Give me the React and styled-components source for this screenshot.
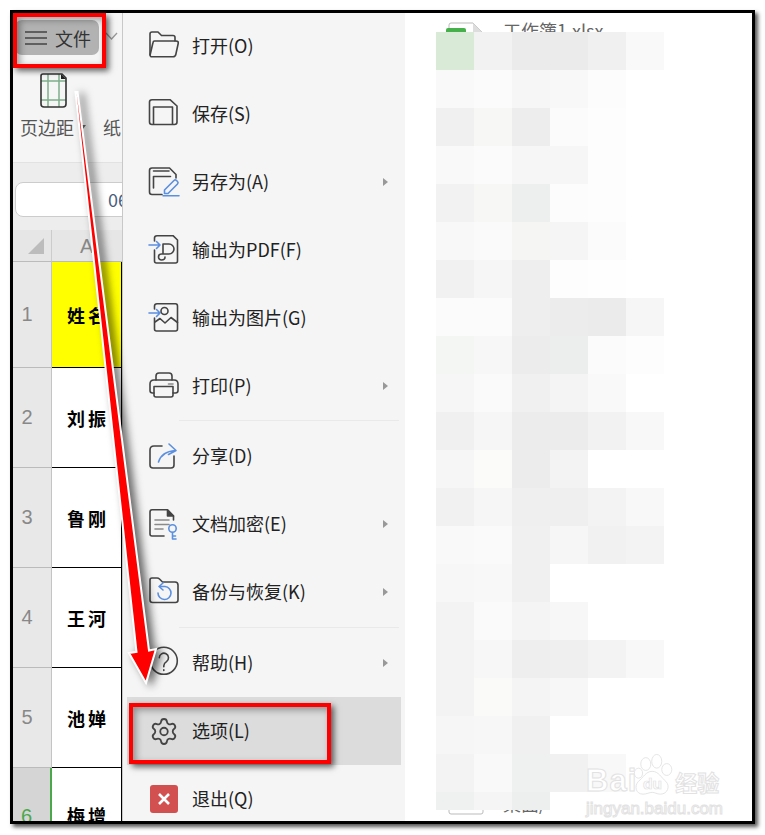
import React from 'react';
import styled, { createGlobalStyle } from 'styled-components';
import { Settings } from 'lucide-react';

const GlobalStyle = createGlobalStyle`
  html, body {
    margin: 0;
    background: #fff;
  }
  * {
    box-sizing: border-box;
  }
`;

const Page = styled.div`
  position: relative;
  width: 765px;
  height: 835px;
  padding: 10px;
  overflow: hidden;
  font-family: "Noto Sans CJK SC", "Noto Sans", sans-serif;
`;
const Frame = styled.div`
  display: flex;
  width: 745px;
  height: 814px;
  border: 3px solid #000;
  background: #fff;
  box-shadow: 3px 3px 4px #555;
  overflow: hidden;
`;

/* spreadsheet behind the menu */
const Sheet = styled.section`
  flex: 0 0 110px;
  display: flex;
  flex-direction: column;
  background: #e8e8e8;
  border-right: 1px solid #c8c8c8;
  overflow: hidden;
`;
const TabRow = styled.div`
  flex: 0 0 49px;
  display: flex;
  align-items: flex-start;
  padding: 7px 0 0 2px;
  background: #f5f5f5;
`;
const FileTab = styled.div`
  display: flex;
  align-items: center;
  gap: 8px;
  width: 84px;
  height: 35px;
  padding-left: 10px;
  border-radius: 7px;
  background: #b2b2b2;
  color: #333;
  font-size: 18px;
  line-height: 1;
`;
const TabCaret = styled.svg`
  margin: 12px 0 0 6px;
`;
const Ribbon = styled.div`
  flex: 0 0 101px;
  display: flex;
  gap: 17px;
  padding: 11px 0 0 7px;
  background: #f5f5f5;
  border-bottom: 1px solid #e2e2e2;
  color: #555;
  font-size: 18px;
  white-space: nowrap;
`;
const RibbonItem = styled.div`
  flex: none;
  display: flex;
  flex-direction: column;
  align-items: center;
  gap: 5px;
`;
const RibbonLabel = styled.div`
  display: flex;
  align-items: center;
  gap: 6px;
  height: 28px;
  margin-top: ${p => (p.$iconless ? '40px' : '0')};
  line-height: 28px;
`;
const DropMark = styled.span`
  width: 0;
  height: 0;
  border-left: 3px solid transparent;
  border-right: 3px solid transparent;
  border-top: 4px solid #666;
`;
const FormulaBar = styled.div`
  flex: 0 0 67px;
  padding: 19px 0 0 2px;
  background: #ededed;
  overflow: hidden;
`;
const NameBox = styled.div`
  width: 140px;
  height: 35px;
  padding-left: 92px;
  border: 1px solid #ccc;
  border-radius: 8px;
  background: #fff;
  color: #4a5f80;
  font-size: 18px;
  line-height: 33px;
`;
const SheetGrid = styled.div`
  display: grid;
  grid-template-columns: 39px 70px;
  grid-template-rows: 32px 106px repeat(5, 100px);
`;
const Corner = styled.div`
  position: relative;
  background: #e6e6e6;
  border-right: 1px solid #ccc;
  border-bottom: 1px solid #bbb;
  &::after {
    content: "";
    position: absolute;
    left: 15px;
    top: 8px;
    border-left: 16px solid transparent;
    border-bottom: 16px solid #bcbcbc;
  }
`;
const ColHead = styled.div`
  padding-left: 28px;
  background: #e6e6e6;
  border-bottom: 1px solid #bbb;
  color: #888;
  font-family: "Liberation Sans", sans-serif;
  font-size: 20px;
  line-height: 32px;
`;
const RowHead = styled.div`
  display: flex;
  align-items: ${p => (p.$active ? 'flex-start' : 'center')};
  justify-content: center;
  padding-top: ${p => (p.$active ? '37px' : '0')};
  padding-right: 10px;
  background: ${p => (p.$active ? '#d5d5d5' : '#e8e8e8')};
  border-right: ${p => (p.$active ? '2px solid #4aa84a' : '1px solid #c4c4c4')};
  border-bottom: 1px solid #bbb;
  color: ${p => (p.$active ? '#4aa84a' : '#888')};
  font-family: "Liberation Sans", sans-serif;
  font-size: 20px;
`;
const NameCell = styled.div`
  display: flex;
  align-items: ${p => (p.$active ? 'flex-start' : 'center')};
  justify-content: center;
  padding-top: ${p => (p.$active ? '34px' : '0')};
  padding-left: 3px;
  background: ${p => (p.$header ? '#ffff00' : '#fff')};
  border-right: 1px solid #000;
  border-bottom: 1px solid #000;
  color: #000;
  font-size: 18px;
  font-weight: 700;
  letter-spacing: 3px;
`;

/* file menu */
const Menu = styled.nav`
  flex: 0 0 282px;
  margin-top: -1px;
  background: #f5f5f5;
`;
const MenuRow = styled.div`
  display: flex;
  align-items: center;
  gap: 13px;
  height: 68px;
  margin: 0 4px;
  padding: 0 13px 0 22px;
  background: ${p => (p.$active ? '#dcdcdc' : 'transparent')};
  color: #222;
  font-size: 18px;
`;
const MenuLabel = styled.span`
  flex: 1;
  margin-top: -2px;
`;
const MenuIcon = styled.svg`
  flex: none;
  width: 30px;
  height: 30px;
  fill: none;
  stroke: #444;
  stroke-width: 1.6;
  stroke-linecap: round;
  stroke-linejoin: round;
  overflow: visible;
`;
const SubMark = styled.span`
  width: 0;
  height: 0;
  border-top: 4.5px solid transparent;
  border-bottom: 4.5px solid transparent;
  border-left: 5px solid #999;
`;
const Divider = styled.div`
  height: 1px;
  margin: ${p => p.$top}px 6px 1px 56px;
  background: #e9e9e9;
`;
const GearSlot = styled.div`
  flex: none;
  display: flex;
  align-items: center;
  justify-content: center;
  width: 30px;
  height: 30px;
  color: #444;
`;
const QuitBox = styled.div`
  flex: none;
  display: flex;
  align-items: center;
  justify-content: center;
  width: 28px;
  height: 28px;
  margin: 0 1px;
  border-radius: 3px;
  background: #d25050;
`;

/* recent files, mostly blurred out */
const Recent = styled.section`
  flex: 1;
  display: flex;
  flex-direction: column;
  justify-content: space-between;
  padding: 7px 0 0 41px;
  background: #fff;
  overflow: hidden;
`;
const FileRow = styled.div`
  display: flex;
  align-items: flex-start;
  gap: 19px;
  height: 24px;
  color: #666;
  font-size: 18px;
  line-height: 20px;
`;
const DeskRow = styled(FileRow)`
  height: 14px;
  align-items: flex-end;
  margin-bottom: 6px;
  line-height: 24px;
`;
const FileThumb = styled.svg`
  flex: none;
  margin-top: 2px;
`;

/* things drawn over the screenshot */
const Mosaic = styled.div`
  position: absolute;
  left: 436px;
  top: 32px;
  display: grid;
  grid-template-columns: repeat(6, 38px);
  grid-auto-rows: 38px;
  height: 778px;
  overflow: hidden;
`;
const Tile = styled.div`
  background: ${p => p.$c};
`;
const RedBox = styled.div`
  position: absolute;
  left: ${p => p.$x}px;
  top: ${p => p.$y}px;
  width: ${p => p.$w}px;
  height: ${p => p.$h}px;
  border: 4px solid #f00;
  box-shadow: 3px 3px 6px rgba(0, 0, 0, .6), inset 3px 3px 7px rgba(0, 0, 0, .35);
`;
const Arrow = styled.svg`
  position: absolute;
  left: 0;
  top: 0;
  filter: drop-shadow(5px 2px 4px rgba(0, 0, 0, .6));
`;
const Watermark = styled.div`
  position: absolute;
  left: 586px;
  top: 751px;
  width: 140px;
  color: #fff;
  -webkit-text-stroke: 1px #e2e2e2;
  font-family: "Liberation Sans", sans-serif;
`;
const MarkTop = styled.div`
  display: flex;
  align-items: flex-end;
  height: 48px;
`;
const MarkBai = styled.span`
  font-size: 31px;
  font-weight: 700;
  line-height: 36px;
  letter-spacing: 1px;
`;
const MarkJing = styled.span`
  font-family: "Noto Sans CJK SC", sans-serif;
  font-size: 22px;
  font-weight: 700;
  line-height: 36px;
`;
const MarkPaw = styled.svg`
  flex: none;
  margin: 0 0 0 -4px;
`;
const MarkUrl = styled.div`
  font-size: 17px;
  line-height: 20px;
  white-space: nowrap;
`;

const blue = '#5b8fdf';
const Blue = styled.path`
  stroke: ${blue};
`;
const Soft = styled.path`
  stroke: #8a8a8a;
`;
const InArrow = () => <Blue d="M0 10H11M7.5 6.5L11 10L7.5 13.5" />;

const icons = {
  open: (
    <>
      <path d="M1 24V3q0-2 2-2H9l3.5 3.5H24q2 0 2 2V10" />
      <path d="M5.5 10H27q2.7 0 2.2 2.5L26.8 23.5q-.5 2.2-2.8 2.2H3q-2.2 0-1.800-2.2L4 11.5q.3-1.500 1.500-1.500z" />
    </>
  ),
  save: (
    <>
      <path d="M3 .7H21L28 7V23q0 2.500-2.500 2.500H3q-2.500 0-2.500-2.500V3Q.5.7 3 .7z" />
      <path d="M4.500 25V8H23.500V25" />
    </>
  ),
  saveAs: (
    <>
      <path d="M13 27.500H3q-2.500 0-2.500-2.500V3.500Q.5 1 3 1H20.500L27 7.500V11" />
      <path d="M4.500 4H20M4.500 21V9.500H21.500" />
      <Blue d="M15.500 26.500V23L25 13.500q1.200-1.200 2.500 0l1 1q1.200 1.300 0 2.500L19 26.500zM14 28.700H30" />
    </>
  ),
  pdf: (
    <>
      <InArrow />
      <path d="M5.500 15V26q0 2 2 2H26.500q2 0 2-2V5L24 .7H8Q5.500.7 5.500 3V6" />
      <path d="M14 19V9h6a5 5 0 0 1 0 10h-7.500a3 3 0 0 0 0 6q3.500 0 3.500-3" />
    </>
  ),
  image: (
    <>
      <InArrow />
      <path d="M5.500 15V26q0 2 2 2H26.500q2 0 2-2V3q0-2.300-2-2.300H8Q5.500.7 5.500 3V6" />
      <circle cx="15.500" cy="8" r="3.500" />
      <path d="M6 19l5-3.500 5 4.500 6-5.500 6.500 5" />
    </>
  ),
  print: (
    <>
      <path d="M7 9V5q0-3 3-3H20q3 0 3 3V9" />
      <path d="M5 22H3.500Q1 22 1 19.500V13q0-4 4-4H25q4 0 4 4v6.500q0 2.500-2.500 2.500H24" />
      <path d="M5 15.500H24V24q0 2-2 2H7q-2 0-2-2z" />
      <Soft d="M19.500 13H24" />
    </>
  ),
  share: (
    <>
      <path d="M13 5H5Q1 5 1 9V24q0 3 3 3H22q3 0 3-3V15" />
      <Blue d="M9.500 21q3-10.500 17-11.500M20 3l7 6.500-7.500 4" />
    </>
  ),
  secure: (
    <>
      <path d="M24.500 11V7L18.500.7H3Q1 .7 1 3V25q0 2 2 2H15" />
      <path d="M18.500 1V7H24.500L18.500 1z" fill="#444" />
      <Soft d="M6 11H20M6 15.500H20M6 20H14" />
      <circle cx="23.500" cy="19.500" r="3.700" stroke={blue} />
      <Blue d="M23.500 23.500V30H27M23.500 27H26.500" />
    </>
  ),
  backup: (
    <>
      <path d="M1 6V3q0-2 2-2H8q1.500 0 2.500 1L13.500 5H26q3 0 3 3V23q0 2.500-2.500 2.500H3.500Q1 25.500 1 23z" />
      <Blue d="M14 6l-4 3.500 4 3.500M10 9.500h6a6.500 6.500 0 1 1-7 6.500" />
    </>
  ),
  help: (
    <>
      <circle cx="14.800" cy="12.800" r="13.500" />
      <path d="M10.300 9.800a4.600 4.600 0 1 1 7.200 3.800q-2.700 1.700-2.700 4.200v1M14.800 21.800v.6" />
    </>
  ),
};

const names = [
  ['1', '姓名'],
  ['2', '刘振'],
  ['3', '鲁刚'],
  ['4', '王河'],
  ['5', '池婵'],
  ['6', '梅增'],
];

const w = '#fff';
const tiles = [
  ['#d9ead6', '#f2f2f2', '#ebebeb', '#ebebeb', '#f0f0f0', '#f9f9f9'],
  ['#f9f9f9', '#fbfbfb', '#f6f6f6', '#f8f8f8', '#fcfcfc', w],
  ['#f0f0f0', '#f7f7f6', '#ededed', '#fbfbfb', '#fdfdfd', w],
  ['#f9f9f9', '#fbfbfb', '#f6f6f6', '#f6f6f6', '#fdfdfd', w],
  ['#f2f2f2', '#f7f7f6', '#edeeee', '#fcfcfc', '#fdfdfd', w],
  ['#f8f8f8', '#fafafa', '#f5f5f4', '#f5f5f5', '#fbfbfb', w],
  ['#f1f1f1', '#f6f6f6', '#eeeeee', '#fdfdfd', '#fefefe', w],
  ['#fbfbfb', '#fbfbfb', '#eeeeee', '#ececec', '#ebebeb', '#f6f6f6'],
  ['#f3f6f3', '#f7f7f7', '#ececec', '#eceded', '#fbfbfb', '#fdfdfd'],
  ['#f6f6f6', '#fafafa', '#f0f0f0', '#f4f4f4', '#f9f9f9', w],
  ['#f0f0f0', '#f6f6f6', '#ececec', '#ececec', '#f2f2f2', '#f8f8f8'],
  ['#f6f6f6', '#fbfbf9', '#ececec', '#f3f3f3', w, w],
  ['#f1f1f1', '#f6f6f6', '#efefef', '#efefef', '#f3f3f3', '#f8f8f8'],
  ['#f9f9f9', '#fafafa', '#f0f0f0', '#f6f6f6', '#f1f1f1', '#f3f3f3'],
  ['#f7f7f7', '#f8f8f8', '#f0f0f0', w, w, w],
  ['#f3f3f3', '#fafafa', '#f4f4f4', '#f7f7f7', w, w],
  ['#f3f3f3', '#f7f7f7', '#eeeeee', '#efefef', '#f3f3f3', '#f8f8f8'],
  ['#f3f3f3', '#fafaf9', '#f4f4f4', '#f7f7f7', w, w],
  ['#f6f6f6', '#f7f7f7', '#f0f0f0', w, w, w],
  ['#f3f3f3', '#f9f9f9', '#eff0f0', '#f1f1f1', '#f8f8f8', w],
  ['#eff0f0', '#f5f5f5', '#edeeee', w, w, w],
];

function Item({ icon, label, more }) {
  return (
    <MenuRow>
      <MenuIcon viewBox="0 0 30 30">{icons[icon]}</MenuIcon>
      <MenuLabel>{label}</MenuLabel>
      {more && <SubMark />}
    </MenuRow>
  );
}

export default function App() {
  return (
    <>
      <GlobalStyle />
      <Page>
        <Frame>
          <Sheet>
            <TabRow>
              <FileTab>
                <svg width="22" height="14" viewBox="0 0 22 14" fill="none" stroke="#444" strokeWidth="1.6">
                  <path d="M0 1H22M0 7H22M0 13H22" />
                </svg>
                文件
              </FileTab>
              <TabCaret width="13" height="8" viewBox="0 0 13 8" fill="none" stroke="#999" strokeWidth="1.3">
                <path d="M1 1L6.500 7L12 1" />
              </TabCaret>
            </TabRow>
            <Ribbon>
              <RibbonItem>
                <svg width="27" height="35" viewBox="0 0 27 35" fill="none">
                  <path d="M8 1V34M19 1V34M1 8H26M1 27H26" stroke="#7fae8c" strokeWidth="1.500" />
                  <path d="M3 1H22L26 5V31q0 3-3 3H4q-3 0-3-3V3q0-2 2-2z" stroke="#333" strokeWidth="1.600" />
                  <path d="M21 1L26 6H21z" fill="#222" />
                </svg>
                <RibbonLabel>
                  页边距
                  <DropMark />
                </RibbonLabel>
              </RibbonItem>
              <RibbonItem>
                <RibbonLabel $iconless>纸张</RibbonLabel>
              </RibbonItem>
            </Ribbon>
            <FormulaBar>
              <NameBox>06</NameBox>
            </FormulaBar>
            <SheetGrid>
              <Corner />
              <ColHead>A</ColHead>
              {names.map(([no, name], i) => (
                <React.Fragment key={no}>
                  <RowHead $active={i === 5}>{no}</RowHead>
                  <NameCell $header={i === 0} $active={i === 5}>{name}</NameCell>
                </React.Fragment>
              ))}
            </SheetGrid>
          </Sheet>

          <Menu>
            <Item icon="open" label="打开(O)" />
            <Item icon="save" label="保存(S)" />
            <Item icon="saveAs" label="另存为(A)" more />
            <Item icon="pdf" label="输出为PDF(F)" />
            <Item icon="image" label="输出为图片(G)" />
            <Item icon="print" label="打印(P)" more />
            <Divider $top={0} />
            <Item icon="share" label="分享(D)" />
            <Item icon="secure" label="文档加密(E)" more />
            <Item icon="backup" label="备份与恢复(K)" more />
            <Divider $top={1} />
            <Item icon="help" label="帮助(H)" more />
            <MenuRow $active>
              <GearSlot>
                <Settings size={33} strokeWidth={1.45} />
              </GearSlot>
              <MenuLabel>选项(L)</MenuLabel>
            </MenuRow>
            <MenuRow>
              <QuitBox>
                <svg width="14" height="14" viewBox="0 0 14 14" stroke="#fff" strokeWidth="2.600">
                  <path d="M2 2L12 12M12 2L2 12" />
                </svg>
              </QuitBox>
              <MenuLabel>退出(Q)</MenuLabel>
            </MenuRow>
          </Menu>

          <Recent>
            <FileRow>
              <FileThumb width="38" height="24" viewBox="0 0 38 24" fill="none">
                <path d="M3 24V3q0-2 2-2H27L37 11V24" stroke="#bbb" />
                <path d="M27 1L37 11H27z" fill="#ddd" />
                <rect x="0" y="6" width="20" height="8" rx="2" fill="#46b04a" />
              </FileThumb>
              工作簿1.xlsx
            </FileRow>
            <DeskRow>
              <FileThumb width="38" height="14" viewBox="0 0 38 14" fill="none">
                <path d="M3 0V11q0 2 2 2H35q2 0 2-2V0" stroke="#bbb" />
              </FileThumb>
              桌面/
            </DeskRow>
          </Recent>
        </Frame>

        <Mosaic>
          {tiles.flat().map((c, i) => (
            <Tile key={i} $c={c} />
          ))}
        </Mosaic>

        <Arrow width="765" height="835" viewBox="0 0 765 835">
          <polygon
            points="75.500,92 77.500,92 149,650.500 156,649 146,683 129,653 136.500,652"
            fill="#f00"
            stroke="#fff"
            strokeWidth="2"
          />
        </Arrow>
        <RedBox $x={13} $y={13} $w={93} $h={55} />
        <RedBox $x={129} $y={703} $w={202} $h={61} />

        <Watermark>
          <MarkTop>
            <MarkBai>Bai</MarkBai>
            <MarkPaw width="42" height="48" viewBox="0 0 46 48" fill="#fff" stroke="#e2e2e2">
              <ellipse cx="14" cy="12" rx="5.500" ry="7" />
              <ellipse cx="26" cy="9" rx="5.500" ry="7.500" />
              <ellipse cx="37" cy="18" rx="5.500" ry="6.500" />
              <ellipse cx="6" cy="22" rx="4.500" ry="5.500" />
              <path d="M21 20c7 0 10 7 15 11 5 5 2 14-6 14-4 0-6-2-9-2s-6 2-10 2c-8 0-10-9-5-14 5-4 8-11 15-11z" />
              <text x="11" y="39" fontFamily="Liberation Sans, sans-serif" fontSize="17" fontWeight="700" strokeWidth="0.800">du</text>
            </MarkPaw>
            <MarkJing>经验</MarkJing>
          </MarkTop>
          <MarkUrl>jingyan.baidu.com</MarkUrl>
        </Watermark>
      </Page>
    </>
  );
}
